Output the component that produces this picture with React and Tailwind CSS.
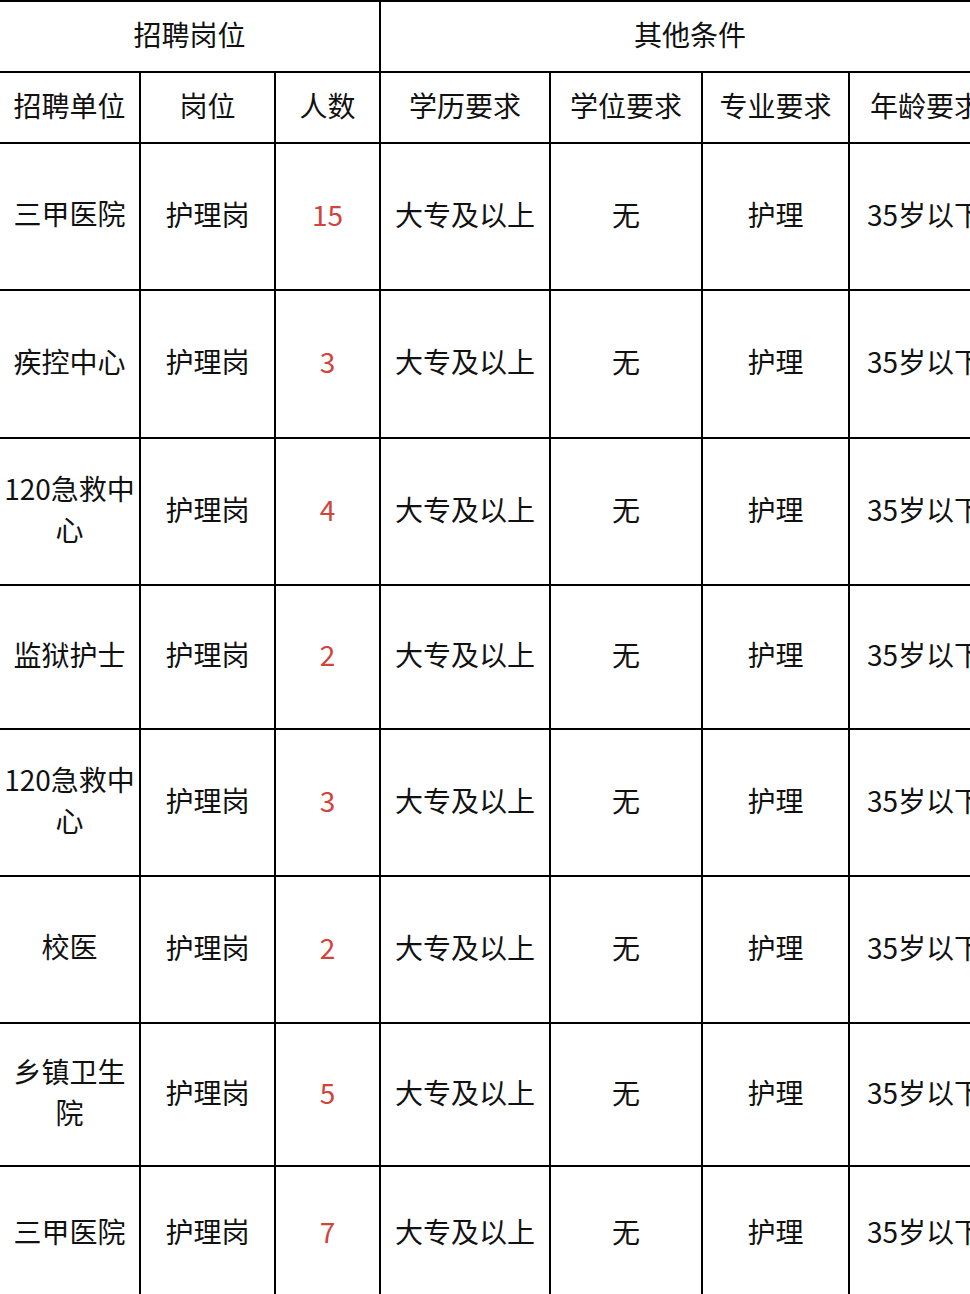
import React from "react";

const rows = [
  { unit: "三甲医院", n: "15", h: 145 },
  { unit: "疾控中心", n: "3", h: 146 },
  { unit: "120急救中心", n: "4", h: 145 },
  { unit: "监狱护士", n: "2", h: 142, shade: true },
  { unit: "120急救中心", n: "3", h: 145 },
  { unit: "校医", n: "2", h: 145 },
  { unit: "乡镇卫生院", n: "5", h: 141 },
  { unit: "三甲医院", n: "7", h: 134 },
];

const cell = "bg-white flex items-center justify-center text-center pb-[6px]";

export default function App() {
  return (
    <div
      className="w-[970px] h-[1294px] overflow-hidden bg-white text-[28px] text-[#111]"
      style={{ fontFamily: '"Noto Sans CJK SC", "Noto Sans", sans-serif' }}
    >
      <div className="w-[1027px] bg-black pt-[2px] grid grid-cols-[139px_133px_103px_168px_150px_145px_177px] gap-[2px]">
        <div className={`${cell} col-span-3 h-[69px]`}>招聘岗位</div>
        <div className={`${cell} col-span-4 h-[69px] pr-[28px]`}>其他条件</div>

        <div className={`${cell} h-[69px]`}>招聘单位</div>
        <div className={`${cell} h-[69px]`}>岗位</div>
        <div className={`${cell} h-[69px]`}>人数</div>
        <div className={`${cell} h-[69px]`}>学历要求</div>
        <div className={`${cell} h-[69px]`}>学位要求</div>
        <div className={`${cell} h-[69px]`}>专业要求</div>
        <div className="bg-white flex items-center justify-start pl-[20px] pb-[6px] h-[69px] whitespace-nowrap">年龄要求</div>

        {rows.map((r, i) => (
          <React.Fragment key={i}>
            <div className={`${cell} leading-[41px]`} style={{ height: r.h }}>
              {r.unit}
            </div>
            <div className={cell} style={{ height: r.h }}>护理岗</div>
            <div
              className={`${cell} text-[#d2433a]`}
              style={{ height: r.h }}
            >
              {r.n}
            </div>
            <div className={`${cell} whitespace-nowrap`} style={{ height: r.h }}>大专及以上</div>
            <div
              className={`${cell} ${r.shade ? "bg-[#fafafa]" : ""}`}
              style={{ height: r.h }}
            >
              无
            </div>
            <div className={cell} style={{ height: r.h }}>护理</div>
            <div
              className="bg-white flex items-center justify-start pl-[17px] pb-[6px] whitespace-nowrap"
              style={{ height: r.h }}
            >
              35岁以下
            </div>
          </React.Fragment>
        ))}
      </div>
    </div>
  );
}
